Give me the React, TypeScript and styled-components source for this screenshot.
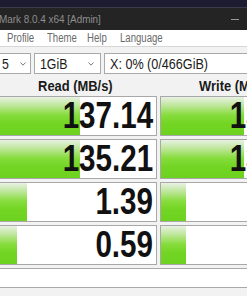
import React from "react";
import styled, { createGlobalStyle } from "styled-components";

const GlobalStyle = createGlobalStyle({
  "html, body": {
    margin: 0,
    padding: 0,
    background: "#f2f2f2"
  },
  body: {
    fontFamily: '"Liberation Sans", Arial, sans-serif'
  }
});

const Squeeze = styled.span<{ $x: number; $o?: string }>(({ $x, $o }) => ({
  display: "inline-block",
  whiteSpace: "nowrap",
  transform: `scaleX(${$x})`,
  transformOrigin: $o || "left center"
}));

const Window = styled.div({
  width: 247,
  height: 296,
  overflow: "hidden",
  background: "#f2f2f2",
  display: "flex",
  flexDirection: "column"
});

const Desktop = styled.div({
  height: 7,
  flexShrink: 0,
  background: "#1e1c31",
  borderBottom: "1px solid #3b3a48"
});

const TitleBar = styled.div({
  height: 22,
  flexShrink: 0,
  background: "#242424",
  display: "flex",
  alignItems: "center",
  justifyContent: "space-between",
  paddingRight: 8,
  color: "#8e8e8e",
  fontSize: 11,
  overflow: "hidden"
});

const TitleText = styled(Squeeze)({
  marginLeft: -51
});

const Minimize = styled.span({
  width: 8,
  height: 1,
  background: "#9a9a9a"
});

const MenuBar = styled.div({
  height: 16,
  flexShrink: 0,
  background: "#ffffff",
  borderBottom: "1px solid #d6d6d6",
  display: "grid",
  gridTemplateColumns: "40px 40px 33px auto",
  alignItems: "center",
  paddingLeft: 7,
  color: "#6a6a6a",
  fontSize: 12
});

const Toolbar = styled.div({
  display: "flex",
  gap: 2,
  marginTop: 6,
  marginLeft: -10,
  height: 21
});

const Combo = styled.div<{ $w: number; $pl: number; $pr: number }>(({ $w, $pl, $pr }) => ({
  width: $w,
  flexShrink: 0,
  boxSizing: "border-box",
  border: "1px solid #a9a9a9",
  background: "#ffffff",
  display: "flex",
  alignItems: "center",
  justifyContent: "space-between",
  paddingLeft: $pl,
  paddingRight: $pr,
  fontSize: 14,
  color: "#1a1a1a",
  "& + &": { marginLeft: 1 }
}));

const Chevron = () => (
  <svg width="6" height="4" viewBox="0 0 6 4">
    <polyline points="0.5,0.5 3,3.2 5.5,0.5" fill="none" stroke="#7a7a7a" strokeWidth="1" />
  </svg>
);

const Grid = styled.div({
  display: "grid",
  gridTemplateColumns: "164px 164px",
  columnGap: 3,
  rowGap: 3,
  marginLeft: -7
});

const Header = styled.div<{ $shift?: number }>(({ $shift }) => ({
  height: 22,
  display: "flex",
  alignItems: "center",
  justifyContent: "center",
  paddingRight: $shift || 0,
  fontWeight: 700,
  fontSize: 15,
  color: "#1a1a1a",
  marginBottom: -3
}));

const fill =
  "linear-gradient(to bottom, #e9f1e4 0%, #bfe79c 22%, #86dc3c 48%, #72d523 70%, #6dd21f 100%)";

const Cell = styled.div({
  height: 40,
  boxSizing: "border-box",
  border: "1px solid #a8a8a8",
  backgroundColor: "#ffffff",
  backgroundImage: fill,
  backgroundRepeat: "no-repeat",
  display: "flex",
  alignItems: "center",
  justifyContent: "flex-end",
  paddingRight: 3,
  paddingBottom: 2,
  fontWeight: 700,
  fontSize: 37,
  lineHeight: 1,
  color: "#111111"
});

const Comment = styled.div({
  height: 20,
  marginTop: 3,
  marginLeft: -5,
  marginRight: -5,
  boxSizing: "border-box",
  border: "1px solid #a9a9a9",
  background: "#ffffff",
  flexShrink: 0
});

const rows = [
  { read: "137.14", readBar: 86, write: "136.52", writeBar: 83 },
  { read: "135.21", readBar: 86, write: "135.80", writeBar: 83 },
  { read: "1.39", readBar: 33, write: "1.12", writeBar: 25 },
  { read: "0.59", readBar: 23, write: "1.07", writeBar: 25 }
];

const menu = ["Profile", "Theme", "Help", "Language"];

export default function App() {
  return (
    <Window>
      <GlobalStyle />
      <Desktop />
      <TitleBar>
        <TitleText $x={0.9}>CrystalDiskMark 8.0.4 x64 [Admin]</TitleText>
        <Minimize />
      </TitleBar>
      <MenuBar>
        {menu.map(m => (
          <Squeeze key={m} $x={0.8}>
            {m}
          </Squeeze>
        ))}
      </MenuBar>
      <Toolbar>
        <Combo $w={41} $pl={11} $pr={4}>
          <Squeeze $x={0.88}>5</Squeeze>
          <Chevron />
        </Combo>
        <Combo $w={67} $pl={5} $pr={6}>
          <Squeeze $x={0.88}>1GiB</Squeeze>
          <Chevron />
        </Combo>
        <Combo $w={170} $pl={5} $pr={6}>
          <Squeeze $x={0.9}>X: 0% (0/466GiB)</Squeeze>
        </Combo>
      </Toolbar>
      <Grid>
        <Header>
          <Squeeze $x={0.86} $o="center">Read (MB/s)</Squeeze>
        </Header>
        <Header $shift={10}>
          <Squeeze $x={0.86} $o="center">Write (MB/s)</Squeeze>
        </Header>
        {rows.map((r, i) => (
          <React.Fragment key={i}>
            <Cell style={{ backgroundSize: `${r.readBar}px 100%` }}>
              <Squeeze $x={0.8} $o="right center">{r.read}</Squeeze>
            </Cell>
            <Cell style={{ backgroundSize: `${r.writeBar}px 100%` }}>
              <Squeeze $x={0.8} $o="right center">{r.write}</Squeeze>
            </Cell>
          </React.Fragment>
        ))}
      </Grid>
      <Comment />
    </Window>
  );
}
